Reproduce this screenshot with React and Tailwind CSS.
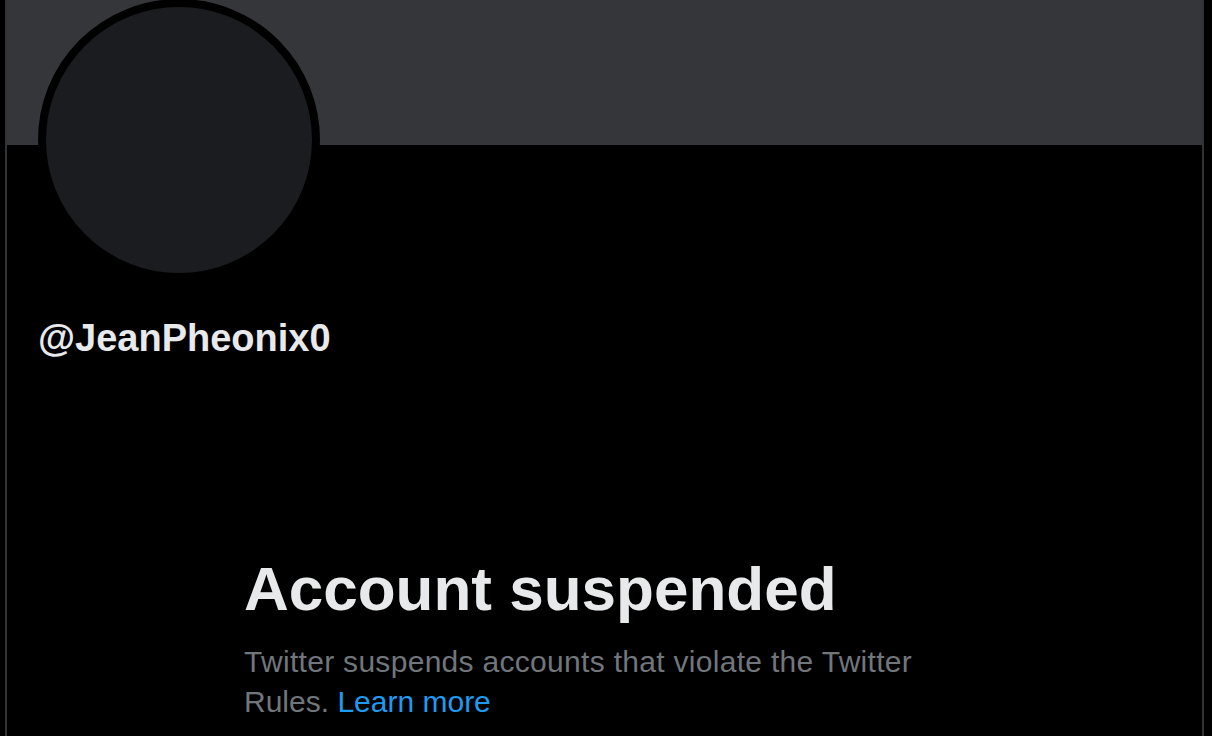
const SuspendedProfile = () => {
    return (
        <div className="w-[1212px] h-[736px] overflow-hidden bg-black pl-[5px] font-['Liberation_Sans',Arial,sans-serif]">
            {/* Primary column */}
            <div className="w-[1199px] h-full border-x-2 border-[#2f3336] flex flex-col">
                {/* Banner */}
                <div className="h-[145px] shrink-0 bg-[#35363a]"></div>

                {/* Avatar */}
                <div className="-mt-[146px] ml-[31px] w-[282px] h-[282px] shrink-0 rounded-full border-8 border-black bg-[#1b1c1f]"></div>

                {/* Handle */}
                <p className="mt-[33px] ml-[31px] text-[38px] leading-[48px] font-bold text-[#e7e9ea]">@JeanPheonix0</p>

                {/* Empty state */}
                <div className="mt-[191px] ml-[237px] w-[672px]">
                    <h1 className="text-[62px] leading-[72px] font-bold text-[#e7e9ea]">Account suspended</h1>
                    <p className="mt-[17px] text-[30px] leading-[40px] text-[#71767b]">
                        <span className="tracking-[0.3px]">Twitter suspends accounts that violate the Twitter</span> Rules.{' '}
                        <span className="text-[#1d9bf0]">Learn more</span>
                    </p>
                </div>
            </div>
        </div>
    );
};

export default function App() {
    return <SuspendedProfile />;
}
